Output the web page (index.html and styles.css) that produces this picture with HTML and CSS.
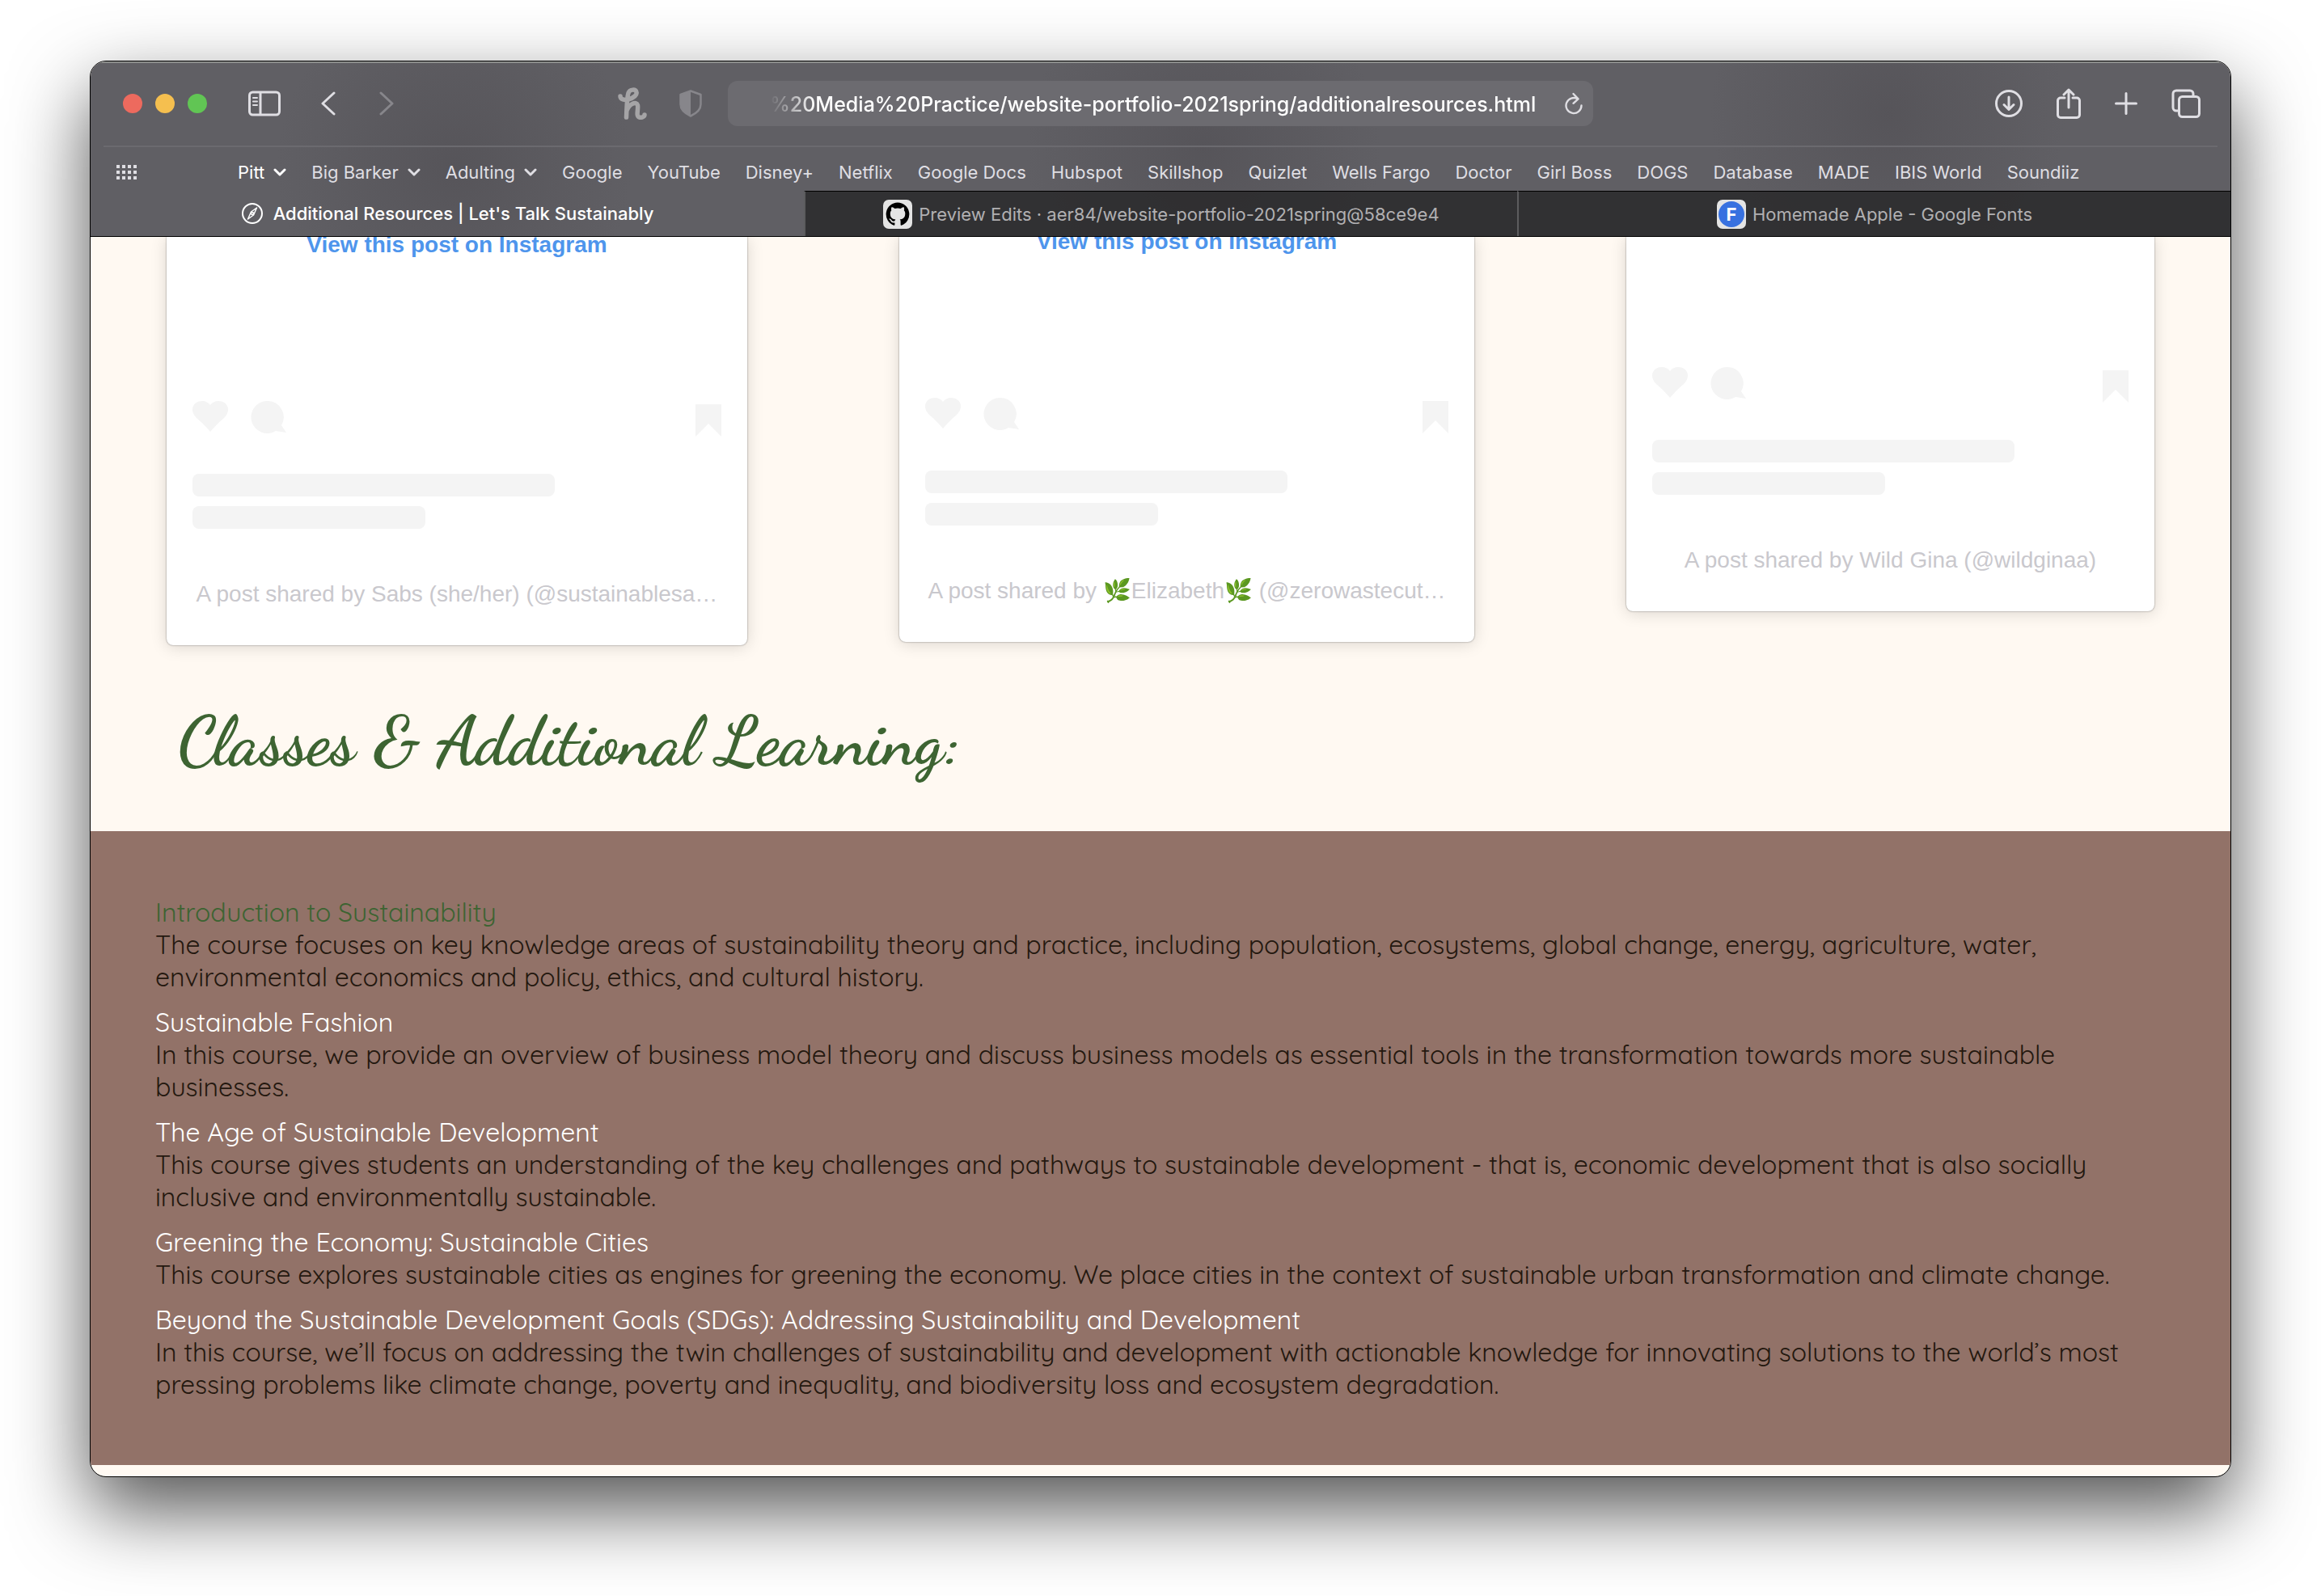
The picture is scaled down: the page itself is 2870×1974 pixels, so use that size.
FILE: index.html
```html
<!DOCTYPE html>
<html lang="en">
<head>
<meta charset="utf-8">
<title>Additional Resources | Let's Talk Sustainably</title>
<link rel="stylesheet" href="styles.css">
</head>
<body>
<svg class="defs" aria-hidden="true">
  <symbol id="chev" viewBox="0 0 16 10"><path d="M2 2l6 6 6-6" fill="none" stroke="currentColor" stroke-width="3" stroke-linecap="round" stroke-linejoin="round"/></symbol>
  <symbol id="heart" viewBox="0 0 44 38"><path d="M22 38C17 32 12 27 5 21C-2 14-1 6 4 2.500C10-1.500 18-.5 22 5C26-.5 34-1.500 40 2.500C45 6 46 14 39 21C32 27 27 32 22 38Z"/></symbol>
  <symbol id="bubble" viewBox="0 0 44 40"><path d="M20 0a20 20 0 1 0 11 37l13 2-6-9A20 20 0 0 0 20 0Z"/></symbol>
  <symbol id="mark" viewBox="0 0 32 40"><path d="M0 0h32v40L16 24 0 40Z"/></symbol>
</svg>
<div class="window">
  <header class="chrome">
    <div class="toolbar">
      <div class="side left">
        <div class="lights"><button class="light red" aria-label="Close"></button><button class="light yellow" aria-label="Minimize"></button><button class="light green" aria-label="Zoom"></button></div>
        <button class="icon sidebar" aria-label="Show sidebar"><svg width="40" height="32" viewBox="0 0 40 32" fill="none" stroke="currentColor" stroke-width="3"><rect x="1.500" y="2" width="37" height="28" rx="4"/><path d="M15 2v28"/><path d="M6 9h5M6 13.500h5M6 18h5" stroke-width="2" stroke-linecap="round"/></svg></button>
        <button class="icon back" aria-label="Back"><svg width="18" height="30" viewBox="0 0 18 30" fill="none" stroke="currentColor" stroke-width="3" stroke-linecap="round" stroke-linejoin="round"><path d="M16 2L2 15l14 13"/></svg></button>
        <button class="icon forward" aria-label="Forward"><svg width="18" height="30" viewBox="0 0 18 30" fill="none" stroke="currentColor" stroke-width="3" stroke-linecap="round" stroke-linejoin="round"><path d="M2 2l14 13L2 28"/></svg></button>
        <span class="spacer"></span>
        <button class="icon honey" aria-label="Honey"><svg width="36" height="40" viewBox="0 0 36 40" fill="none" stroke="currentColor" stroke-width="5.500" stroke-linecap="round" stroke-linejoin="round"><path d="M3 11C3 15 8 16 13 15C20 13 24 9 23 6C22 2 15 2 13 7C11 13 11 28 10.500 37M11 29C14 20 23 17 24.500 22C25.500 27 22 36 26.500 37C30 38 33 36 33 34"/></svg></button>
        <button class="icon shield" aria-label="Privacy report"><svg width="28" height="34" viewBox="0 0 28 34"><path d="M14 1.500L26.500 6v12c0 6-5 11-12.500 14.500C6.500 29 1.500 24 1.500 18V6Z" fill="none" stroke="currentColor" stroke-width="2.500" stroke-linejoin="round"/><path d="M14 1.500V32.500C6.500 29 1.500 24 1.500 18V6Z" fill="currentColor"/></svg></button>
      </div>
      <div class="address">
        <input type="text" aria-label="Address" value="%20Media%20Practice/website-portfolio-2021spring/additionalresources.html">
        <button class="icon" aria-label="Reload"><svg width="24" height="28" viewBox="0 0 24 28" fill="none" stroke="currentColor" stroke-width="2.400" stroke-linecap="round" stroke-linejoin="round"><path d="M17 8.500A9.500 9.500 0 1 0 21.500 16.500M11.500 2l6 6.300-6 5.500"/></svg></button>
      </div>
      <div class="side right">
        <button class="icon" aria-label="Downloads"><svg width="34" height="34" viewBox="0 0 34 34" fill="none" stroke="currentColor" stroke-width="3" stroke-linecap="round" stroke-linejoin="round"><circle cx="17" cy="17" r="15.500"/><path d="M17 9v15M11 18.500l6 6 6-6"/></svg></button>
        <button class="icon share" aria-label="Share"><svg width="30" height="38" viewBox="0 0 30 38" fill="none" stroke="currentColor" stroke-width="3" stroke-linecap="round" stroke-linejoin="round"><path d="M10 12H5a3.500 3.500 0 0 0-3.500 3.500V33A3.500 3.500 0 0 0 5 36.500h20a3.500 3.500 0 0 0 3.500-3.500V15.500A3.500 3.500 0 0 0 25 12h-5M15 24V2M9 8l6-6 6 6"/></svg></button>
        <button class="icon" aria-label="New tab"><svg width="28" height="28" viewBox="0 0 28 28" fill="none" stroke="currentColor" stroke-width="3" stroke-linecap="round"><path d="M14 1.500v25M1.500 14h25"/></svg></button>
        <button class="icon" aria-label="Tab overview"><svg width="36" height="36" viewBox="0 0 36 36" fill="none" stroke="currentColor" stroke-width="3" stroke-linejoin="round"><rect x="9.500" y="9.500" width="25" height="25" rx="4"/><path d="M9 27H6a4 4 0 0 1-4-4V6a4 4 0 0 1 4-4h17a4 4 0 0 1 4 4v3"/></svg></button>
      </div>
    </div>
    <nav class="favorites" aria-label="Favorites">
      <button class="icon grid" aria-label="Show favorites"><svg width="26" height="20" viewBox="0 0 26 20" fill="none" stroke="currentColor" stroke-width="4" stroke-dasharray="4 3"><path d="M0 3h26M0 10h26M0 17h26"/></svg></button>
      <div class="links">
        <button class="menu on">Pitt <svg width="16" height="10"><use href="#chev"/></svg></button>
        <button class="menu">Big Barker <svg width="16" height="10"><use href="#chev"/></svg></button>
        <button class="menu">Adulting <svg width="16" height="10"><use href="#chev"/></svg></button>
        <a href="#">Google</a><a href="#">YouTube</a><a href="#">Disney+</a><a href="#">Netflix</a><a href="#">Google Docs</a><a href="#">Hubspot</a><a href="#">Skillshop</a><a href="#">Quizlet</a><a href="#">Wells Fargo</a><a href="#">Doctor</a><a href="#">Girl Boss</a><a href="#">DOGS</a><a href="#">Database</a><a href="#">MADE</a><a href="#">IBIS World</a><a href="#">Soundiiz</a>
      </div>
    </nav>
    <div class="tabs" role="tablist">
      <button class="tab active" role="tab" aria-selected="true"><svg width="28" height="28" viewBox="0 0 28 28" fill="none" stroke="currentColor" stroke-width="2"><circle cx="14" cy="14" r="12"/><path d="M19.500 7l-4 9-7 5 4-9Z" stroke-width="1.500" stroke-linejoin="round"/><circle cx="14" cy="14" r="1.500" stroke-width="1.500"/></svg>Additional Resources | Let's Talk Sustainably</button>
      <button class="tab" role="tab" aria-selected="false"><svg width="36" height="36" viewBox="0 0 36 36"><rect width="36" height="36" rx="7" fill="#e4e4e4"/><path d="M18 3.500a14.500 14.500 0 0 0-4.600 28.200c.7.100 1-.3 1-.7v-2.600c-4 .9-5-1.800-5-1.800-.6-1.600-1.500-2.100-1.500-2.100-1.400-.9.100-.9.100-.9 1.500.1 2.300 1.500 2.300 1.500 1.200 2.300 3.300 1.600 4.200 1.200.1-.9.500-1.600.9-2-3.300-.3-6.600-1.600-6.600-7.100 0-1.600.5-2.800 1.500-3.900-.2-.4-.7-1.900.1-3.900 0 0 1.200-.4 4 1.500a14 14 0 0 1 7.300 0c2.800-1.900 4-1.500 4-1.500.8 2 .3 3.500.1 3.900 1 1 1.500 2.300 1.500 3.900 0 5.500-3.400 6.800-6.700 7.100.6.500 1 1.400 1 2.700V31c0 .4.300.8 1 .7A14.500 14.500 0 0 0 18 3.500Z" fill="#000"/></svg>Preview Edits · aer84/website-portfolio-2021spring@58ce9e4</button>
      <button class="tab" role="tab" aria-selected="false"><span class="ficon"><b>F</b></span>Homemade Apple - Google Fonts</button>
    </div>
  </header>
  <main>
    <section class="posts">
      <article class="post tall">
        <a class="view" href="#">View this post on Instagram</a>
        <div class="acts"><svg width="44" height="38"><use href="#heart"/></svg><svg width="44" height="40"><use href="#bubble"/></svg><svg class="mark" width="32" height="40"><use href="#mark"/></svg></div>
        <div class="bar"></div><div class="bar short"></div>
        <p><a href="#">A post shared by Sabs (she/her) (@sustainablesa…</a></p>
      </article>
      <article class="post mid">
        <a class="view" href="#">View this post on Instagram</a>
        <div class="acts"><svg width="44" height="38"><use href="#heart"/></svg><svg width="44" height="40"><use href="#bubble"/></svg><svg class="mark" width="32" height="40"><use href="#mark"/></svg></div>
        <div class="bar"></div><div class="bar short"></div>
        <p><a href="#">A post shared by 🌿Elizabeth🌿 (@zerowastecut…</a></p>
      </article>
      <article class="post low">
        <div class="acts"><svg width="44" height="38"><use href="#heart"/></svg><svg width="44" height="40"><use href="#bubble"/></svg><svg class="mark" width="32" height="40"><use href="#mark"/></svg></div>
        <div class="bar"></div><div class="bar short"></div>
        <p><a href="#">A post shared by Wild Gina (@wildginaa)</a></p>
      </article>
    </section>
    <h1>Classes &amp; Additional Learning:</h1>
    <dl class="courses">
      <dt><a class="hover" href="#">Introduction to Sustainability</a></dt>
      <dd>The course focuses on key knowledge areas of sustainability theory and practice, including population, ecosystems, global change, energy, agriculture, water,<br>environmental economics and policy, ethics, and cultural history.</dd>
      <dt><a href="#">Sustainable Fashion</a></dt>
      <dd>In this course, we provide an overview of business model theory and discuss business models as essential tools in the transformation towards more sustainable<br>businesses.</dd>
      <dt><a href="#">The Age of Sustainable Development</a></dt>
      <dd>This course gives students an understanding of the key challenges and pathways to sustainable development - that is, economic development that is also socially<br>inclusive and environmentally sustainable.</dd>
      <dt><a href="#">Greening the Economy: Sustainable Cities</a></dt>
      <dd>This course explores sustainable cities as engines for greening the economy. We place cities in the context of sustainable urban transformation and climate change.</dd>
      <dt><a href="#">Beyond the Sustainable Development Goals (SDGs): Addressing Sustainability and Development</a></dt>
      <dd>In this course, we’ll focus on addressing the twin challenges of sustainability and development with actionable knowledge for innovating solutions to the world’s most<br>pressing problems like climate change, poverty and inequality, and biodiversity loss and ecosystem degradation.</dd>
    </dl>
  </main>
</div>
</body>
</html>
```

FILE: styles.css
```css
* { box-sizing: border-box; }
body { margin: 0; padding: 75px 111px 147px; background: #fff; font-family: Inter, sans-serif; }
button { background: none; border: 0; padding: 0; font: inherit; color: inherit; }
a { color: inherit; text-decoration: none; }
svg { display: block; flex: none; }
.defs { position: absolute; width: 0; height: 0; }

.window { border: 1px solid #000; border-radius: 20px; overflow: hidden; background: #fff9f2; box-shadow: 0 40px 96px rgba(0, 0, 0, .68); }

.chrome {
  color: #dfdee3;
  background:
    radial-gradient(ellipse 220px 220px at 17% 60%, rgba(82, 80, 85, .7), transparent),
    radial-gradient(ellipse 220px 220px at 52% 50%, rgba(82, 80, 85, .7), transparent),
    radial-gradient(ellipse 220px 220px at 84% 30%, rgba(82, 80, 85, .7), transparent),
    #605f64;
  box-shadow: inset 0 2px #8b8d8b;
  border-bottom: 1px solid #000;
}
.toolbar { display: grid; grid-template-columns: minmax(0, 1fr) 1070px minmax(0, 1fr); align-items: center; height: 106px; margin: 0 16px; border-bottom: 2px solid #6b6a6f; }
.side { display: flex; align-items: center; }
.lights { display: flex; gap: 16px; margin-left: 24px; }
.light { width: 24px; height: 24px; border-radius: 50%; }
.red { background: #ed6a5e; }
.yellow { background: #f5bf4f; }
.green { background: #61c554; }
.sidebar { margin-left: 51px; }
.back { margin-left: 50px; }
.forward { margin-left: 54px; color: #87868b; }
.spacer { flex: 1; }
.honey { color: #a5a4a6; }
.shield { margin: 0 32px 0 40px; color: #87868b; }
.address { display: flex; align-items: center; height: 56px; padding: 0 12px 0 52px; border-radius: 12px; background: #6c6b70; }
.address input { flex: 1; min-width: 0; height: 56px; padding: 2px 0 0; border: 0; outline: 0; background: none; color: #fff; font: 500 25px/32px Inter, sans-serif; mask-image: linear-gradient(90deg, transparent, #000 56px); }
.address button { margin-left: 24px; }
.right { justify-content: flex-end; gap: 42px; padding-right: 21px; }

.favorites { display: flex; align-items: center; height: 54px; padding: 7px 0 0 32px; font-size: 22px; line-height: 32px; }
.links { display: flex; gap: 31px; margin-left: 124px; white-space: nowrap; }
.menu { display: flex; align-items: center; gap: 11px; }
.on { color: #fff; }

.tabs { display: grid; grid-template-columns: repeat(3, 1fr); height: 56px; font-size: 22px; line-height: 32px; }
.tab { display: flex; align-items: center; justify-content: center; gap: 8px; border-top: 1px solid #000; background: rgba(38, 38, 39, .8); color: #b1b0b2; white-space: nowrap; }
.tab + .tab { border-left: 2px solid #5c5c5e; }
.tab.active { gap: 12px; border-top: 0; background: none; color: #fff; font-weight: 500; }
.ficon { display: grid; place-items: center; width: 36px; height: 36px; border-radius: 7px; background: #e4e4e4; }
.ficon b { width: 32px; height: 32px; border-radius: 50%; background: #3871e0; color: #fff; font-size: 22px; line-height: 32px; text-align: center; }

.posts { display: grid; grid-template-columns: 718fr 711fr 653fr; gap: 188px; padding: 0 94px; font-family: "Liberation Sans", sans-serif; font-size: 28px; line-height: 34px; }
.post { display: flex; flex-direction: column; justify-content: flex-end; overflow: hidden; padding: 0 32px 46px; border-radius: 0 0 8px 8px; background: #fff; box-shadow: 0 0 2px rgba(0, 0, 0, .5), 0 2px 20px rgba(0, 0, 0, .15); clip-path: inset(0 -40px -40px); }
.post > * { flex: none; }
.tall { height: 505px; }
.mid { height: 501px; }
.low { height: 463px; }
.view { align-self: center; margin-bottom: 176px; color: #4e95ec; font-weight: 700; }
.acts { display: flex; gap: 28px; align-items: flex-start; fill: #f4f4f4; margin-bottom: 46px; padding-bottom: 4px; }
.mark { margin: 4px 0 -4px auto; }
.bar { width: 448px; height: 28px; border-radius: 8px; background: #f4f4f4; margin-bottom: 12px; }
.short { width: 288px; margin-bottom: 64px; }
.post p { margin: 0; text-align: center; color: #c9c8cd; white-space: nowrap; }

h1 { margin: 70px 108px 60px; color: #3d6432; font: 700 84px/100px "Homemade Apple", "Dancing Script", "Liberation Serif", cursive; }
.courses { margin: 0 0 14px; padding: 80px; background: #927268; color: #24180f; font: 32px/40px Quicksand, Lato, sans-serif; white-space: nowrap; }
.courses dt { color: #fff; }
.courses dd { margin: 0 0 16px; }
.courses dd:last-child { margin: 0; }
.hover { color: #3d6432; }
```
